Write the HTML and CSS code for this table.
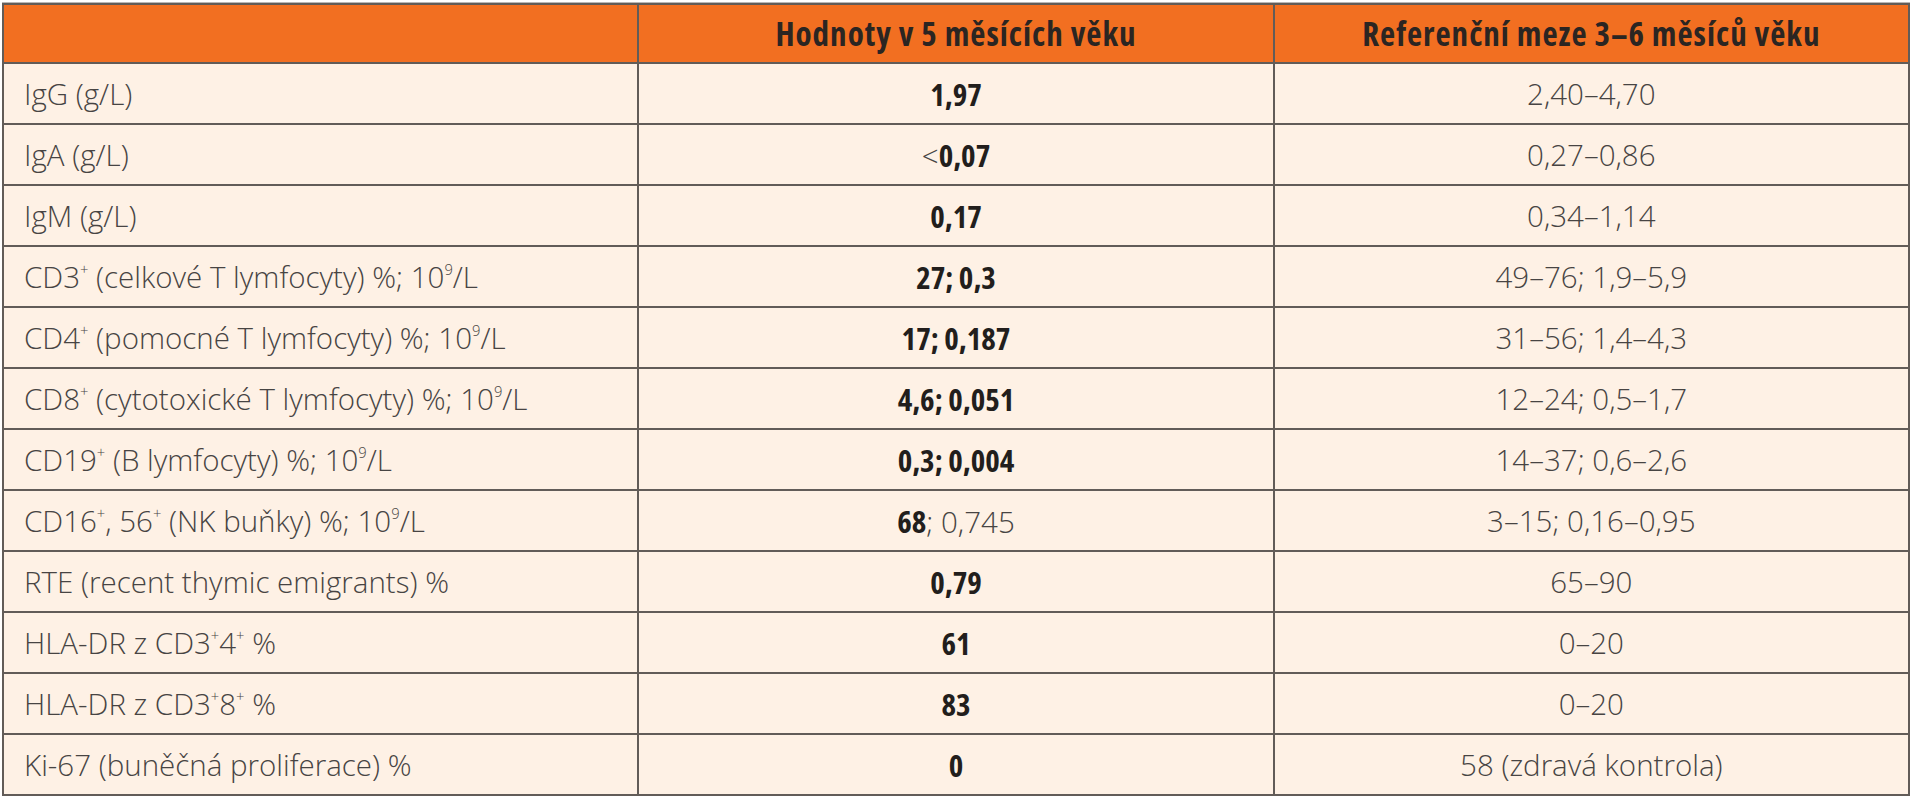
FILE: index.html
```html
<!DOCTYPE html>
<html lang="cs">
<head>
<meta charset="utf-8">
<title>Imunologické vyšetření</title>
<link rel="stylesheet" href="styles.css">
</head>
<body>
<table class="lab">
  <thead>
    <tr>
      <th class="c-name"></th>
      <th>Hodnoty v 5 měsících věku</th>
      <th>Referenční meze 3–6 měsíců věku</th>
    </tr>
  </thead>
  <tbody>
    <tr><td class="c-name">IgG (g/L)</td><td class="val"><b>1,97</b></td><td class="ref">2,40–4,70</td></tr>
    <tr><td class="c-name">IgA (g/L)</td><td class="val">&lt;<b>0,07</b></td><td class="ref">0,27–0,86</td></tr>
    <tr><td class="c-name">IgM (g/L)</td><td class="val"><b>0,17</b></td><td class="ref">0,34–1,14</td></tr>
    <tr><td class="c-name">CD3<sup>+</sup> (celkové T lymfocyty) %; 10<sup>9</sup>/L</td><td class="val"><b>27; 0,3</b></td><td class="ref">49–76; 1,9–5,9</td></tr>
    <tr><td class="c-name">CD4<sup>+</sup> (pomocné T lymfocyty) %; 10<sup>9</sup>/L</td><td class="val"><b>17; 0,187</b></td><td class="ref">31–56; 1,4–4,3</td></tr>
    <tr><td class="c-name">CD8<sup>+</sup> (cytotoxické T lymfocyty) %; 10<sup>9</sup>/L</td><td class="val"><b>4,6; 0,051</b></td><td class="ref">12–24; 0,5–1,7</td></tr>
    <tr><td class="c-name">CD19<sup>+</sup> (B lymfocyty) %; 10<sup>9</sup>/L</td><td class="val"><b>0,3; 0,004</b></td><td class="ref">14–37; 0,6–2,6</td></tr>
    <tr><td class="c-name">CD16<sup>+</sup>, 56<sup>+</sup> (NK buňky) %; 10<sup>9</sup>/L</td><td class="val"><b>68</b>; 0,745</td><td class="ref">3–15; 0,16–0,95</td></tr>
    <tr><td class="c-name">RTE (recent thymic emigrants) %</td><td class="val"><b>0,79</b></td><td class="ref">65–90</td></tr>
    <tr><td class="c-name">HLA-DR z CD3<sup>+</sup>4<sup>+</sup> %</td><td class="val"><b>61</b></td><td class="ref">0–20</td></tr>
    <tr><td class="c-name">HLA-DR z CD3<sup>+</sup>8<sup>+</sup> %</td><td class="val"><b>83</b></td><td class="ref">0–20</td></tr>
    <tr><td class="c-name">Ki-67 (buněčná proliferace) %</td><td class="val"><b>0</b></td><td class="ref">58 (zdravá kontrola)</td></tr>
  </tbody>
</table>
</body>
</html>
```

FILE: styles.css
```css
html, body {
  margin: 0;
  padding: 0;
  background: #ffffff;
}

body {
  padding: 3px 6px 0 2px;
}

.lab {
  width: 1908px;
  border-collapse: collapse;
  table-layout: fixed;
  background: #fef1e5;
  font-family: "Open Sans", "Liberation Sans", sans-serif;
  font-weight: 300;
  font-size: 29.5px;
  color: #474443;
  border: 2px solid #5b5653;
  box-shadow: 0 -1px 0 #b9b7b6;
}

.lab th,
.lab td {
  border: 2px solid #625c58;
  padding: 0 20px;
  vertical-align: middle;
  white-space: nowrap;
}

.lab thead tr {
  height: 59px;
}

.lab tbody tr {
  height: 61px;
}

.lab th {
  background: #f26f21;
  color: #2b2522;
  font-family: "Open Sans", "Liberation Sans", sans-serif;
  font-stretch: 75%;
  font-weight: 700;
  font-size: 33px;
  letter-spacing: 1px;
  text-align: center;
}

.lab td.c-name {
  text-align: left;
}

.lab td.val,
.lab td.ref {
  text-align: center;
}

.lab td.val b {
  font-family: "Open Sans", "Liberation Sans", sans-serif;
  font-stretch: 75%;
  font-weight: 700;
  font-size: 31px;
  color: #221e1c;
}

.lab sup {
  font-size: 0.5em;
  line-height: 0;
  vertical-align: 0.9em;
}
```
